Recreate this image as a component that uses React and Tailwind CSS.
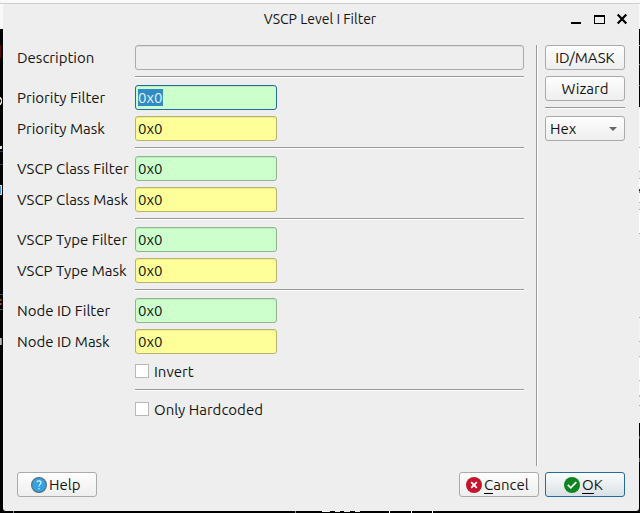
import React from "react";

const font = "font-['Ubuntu','Noto_Sans',sans-serif]";

function Strip({ parts, className }) {
  return (
    <div className={`flex flex-col shrink-0 overflow-hidden ${className}`}>
      {parts.map(([h, c], i) => (
        <div key={i} className="shrink-0" style={{ height: h, background: c }} />
      ))}
    </div>
  );
}

const leftParts = [
  [25, "#f9f9f9"], [16, "#000"], [13, "linear-gradient(90deg,#5a0808 33%,#000 33%)"], [38, "#000"],
  [10, "radial-gradient(circle at -3px 50%,#000 3.5px,#e8e0d0 4px,#e8e0d0 5px,#000 5.5px)"],
  [40, "#000"], [3, "linear-gradient(90deg,#ddd 50%,#000 70%)"], [2, "#000"], [1, "#1d4350"], [12, "#000"], [1, "#1d4350"],
  [20, "#000"], [1, "linear-gradient(90deg,#ddd 50%,#000 70%)"],
  [8, "linear-gradient(90deg,#4b8fc5 40%,#ddd 40%,#ddd 75%,#000 75%)"],
  [1, "linear-gradient(90deg,#ddd 50%,#000 70%)"], [99, "#000"],
  [1, "#275263"], [4, "#000"], [2, "linear-gradient(90deg,#a34b20 40%,#000 60%)"], [2, "#000"],
  [2, "linear-gradient(90deg,#a34b20 40%,#000 60%)"], [4, "#000"], [1, "#275263"], [28, "#000"],
  [7, "linear-gradient(90deg,#bbb 40%,#000 80%)"], [170, "#000"],
];

const rightParts = [
  [25, "#f9f9f9"], [16, "#000"], [1, "#aaa"], [18, "#000"], [1, "#438da6"], [20, "#000"],
  [1, "#438da6"], [21, "#000"], [40, "#f9f9f9"], [1, "#aaa"], [23, "#fff"],
  [1, "#aaa"], [6, "#eee"], [1, "#aaa"], [10, "#fff"], [2, "#28235f"], [2, "#b98732"],
  [9, "#fff"], [1, "#aaa"], [6, "#eee"], [1, "#aaa"], [23, "#fff"], [1, "#aaa"],
  [83, "#eee"], [1, "#b5b574"], [23, "#ffff99"], [1, "#b5b574"], [14, "#eee"],
  [1, "#aaa"], [23, "#fff"], [1, "#aaa"], [14, "#fafafa"], [2, "#d8be7c"], [8, "#eee"],
  [1, "#aaa"], [17, "#eee"], [13, "#000"], [3, "#285896"], [19, "#000"], [4, "#32606b"], [60, "#000"],
];

function Rule() {
  return <div className="h-[2px] mt-[6px] mb-[7px] shrink-0 border-t border-t-[#999] bg-white" />;
}

function Label({ children }) {
  return <span className="w-[118px] shrink-0 whitespace-nowrap leading-[26px]">{children}</span>;
}

function Field({ label, kind, focused }) {
  const colors = focused
    ? "bg-[#ccffcc] border-[#236b9d]"
    : kind === "filter"
      ? "bg-[#ccffcc] border-[#91b591]"
      : "bg-[#ffff99] border-[#b5b56d]";
  return (
    <div className="flex h-[25px] shrink-0">
      <Label>{label}</Label>
      <div className={`w-[142px] h-[25px] rounded-[3px] border pl-[2px] flex items-center shadow-[inset_0_1px_0_rgba(0,0,0,0.07)] ${colors}`}>
        <span className={`h-[17px] leading-[18px] w-[25px] whitespace-nowrap ${focused ? "bg-[#308cc6] text-[#e7f3fa]" : ""}`}>0x0</span>
      </div>
    </div>
  );
}

function Pair({ name, focused }) {
  return (
    <div className="flex flex-col gap-[6px]">
      <Field label={`${name} Filter`} kind="filter" focused={focused} />
      <Field label={`${name} Mask`} kind="mask" />
    </div>
  );
}

function Button({ children, justify = "justify-center", className = "border-[#aaa] from-[#fefefe] to-[#eee]" }) {
  return (
    <div className={`w-[80px] h-[25px] shrink-0 rounded-[3px] border bg-linear-to-b flex items-center whitespace-nowrap leading-[24px] ${justify} ${className}`}>
      {children}
    </div>
  );
}

function Check({ children }) {
  return (
    <div className="ml-[118px] h-[14px] flex items-center">
      <div className="size-[14px] bg-white border border-[#b8b8b8]" />
      <span className="ml-[5px] leading-[16px] pt-px whitespace-nowrap">{children}</span>
    </div>
  );
}

function TitleBar() {
  return (
    <div className="h-[41px] shrink-0 flex">
      <div className="w-[136px] shrink-0" />
      <div className="flex-1 text-center text-[14px] leading-[30px] pr-[2px]">VSCP Level I Filter</div>
      <svg className="w-[136px] h-[41px] shrink-0" viewBox="503 4 136 41" shapeRendering="crispEdges">
        <path d="M571 22h10v2h-10z" />
        <path fillRule="evenodd" d="M594 15h11v9h-11zM595 17v6h9v-6z" />
        <path d="m617.7 14.5 8.6 9m0-9-8.6 9" stroke="#000" strokeWidth="2.2" shapeRendering="auto" />
      </svg>
    </div>
  );
}

export default function App() {
  return (
    <div className={`w-[640px] h-[513px] overflow-hidden flex flex-col bg-[#f9f9f9] text-[#151515] text-[15px] ${font}`}>
      <div className="h-[4px] shrink-0 border-b border-b-[#ccc]" />
      <div className="flex h-[507px] shrink-0">
        <Strip className="w-[3px]" parts={leftParts} />
        <div className="w-[636px] h-full shrink-0 bg-linear-to-b from-[#f9f9f9] from-50% to-black to-50%">
          <div className="h-full bg-[#eee] rounded-[3px] flex flex-col">
            <TitleBar />
            <div className="flex pl-[14px] h-[427px] shrink-0">
              <div className="w-[507px] flex flex-col shrink-0">
                <div className="flex h-[25px] shrink-0">
                  <Label>Description</Label>
                  <div className="w-[389px] border border-[#aaa] rounded-[3px] shadow-[inset_0_1px_0_#ddd]" />
                </div>
                <div className="ml-[118px]"><Rule /></div>
                <Pair name="Priority" focused />
                <div className="ml-[118px]"><Rule /></div>
                <Pair name="VSCP Class" />
                <div className="ml-[118px]"><Rule /></div>
                <Pair name="VSCP Type" />
                <div className="ml-[118px]"><Rule /></div>
                <Pair name="Node ID" />
                <div className="mt-[10px]"><Check>Invert</Check></div>
                <div className="ml-[118px] mt-[11px] h-[2px] border-t border-t-[#999] bg-white" />
                <div className="mt-[11px]"><Check>Only Hardcoded</Check></div>
              </div>
              <div className="ml-[12px] w-[2px] h-[421px] border-l border-l-[#999] bg-white shrink-0" />
              <div className="ml-[7px] w-[80px] flex flex-col shrink-0">
                <Button>ID/MASK</Button>
                <div className="h-[6px]" />
                <Button>Wizard</Button>
                <Rule />
                <Button justify="justify-between">
                  <span className="pl-[4px]">Hex</span>
                  <svg className="mr-[7px]" width="8" height="4" viewBox="0 0 8 4" fill="#666"><path d="M0 0h8L4 4z" /></svg>
                </Button>
              </div>
            </div>
            <div className="flex pl-[14px] pr-[14px] h-[25px] shrink-0">
              <Button justify="justify-start pl-[13px]">
                <svg className="mr-[2px]" width="16" height="16" viewBox="0 0 16 16">
                  <circle cx="8" cy="8" r="7.4" fill="#35a2e4" stroke="#55707f" strokeWidth="1.2" />
                  <path d="M5.9 5.2C6.2 3.2 10.2 3.3 10 5.8 9.8 7.4 8 7.5 8 9.5M8 11v1.3" fill="none" stroke="#d9f1ff" strokeWidth="1.2" />
                </svg>
                <span>Help</span>
              </Button>
              <div className="flex-1" />
              <Button justify="justify-start pl-[6px]">
                <svg className="mr-[2px]" width="16" height="16" viewBox="0 0 16 16">
                  <circle cx="8" cy="8" r="8" fill="#c6162e" />
                  <path d="m5.2 5.2 5.6 5.6m0-5.6-5.6 5.6" stroke="#fff" strokeWidth="1.8" />
                </svg>
                <span><span className="border-b border-black inline-block leading-[16px]">C</span>ancel</span>
              </Button>
              <div className="w-[6px]" />
              <Button justify="justify-start pl-[18px]" className="border-[#236b9d] from-[#fbfcfd] to-[#d9e1e5]">
                <svg className="mr-[2px]" width="16" height="16" viewBox="0 0 16 16">
                  <circle cx="8" cy="8" r="8" fill="#0e8420" />
                  <path d="m3.8 7.8 3 3 5.5-5.6" fill="none" stroke="#fff" strokeWidth="1.8" />
                </svg>
                <span><span className="border-b border-black inline-block leading-[16px]">O</span>K</span>
              </Button>
            </div>
          </div>
        </div>
        <Strip className="w-px" parts={rightParts} />
      </div>
      <div className="h-[2px] shrink-0 bg-black flex">
        <div className="ml-[13px] w-px bg-[#5d9fb5]" />
        <div className="ml-[281px] w-px bg-[#5d9fb5]" />
        <div className="ml-[26px] w-[8px] h-px bg-white" />
        <div className="ml-[5px] w-[5px] h-px bg-[#eee]" />
        <div className="ml-[4px] w-[6px] h-px bg-[#eee]" />
        <div className="ml-[5px] w-[5px] h-px bg-[#eee]" />
        <div className="ml-[29px] w-px bg-white" />
        <div className="ml-[21px] w-px bg-white" />
        <div className="ml-[20px] w-px bg-white" />
      </div>
    </div>
  );
}
